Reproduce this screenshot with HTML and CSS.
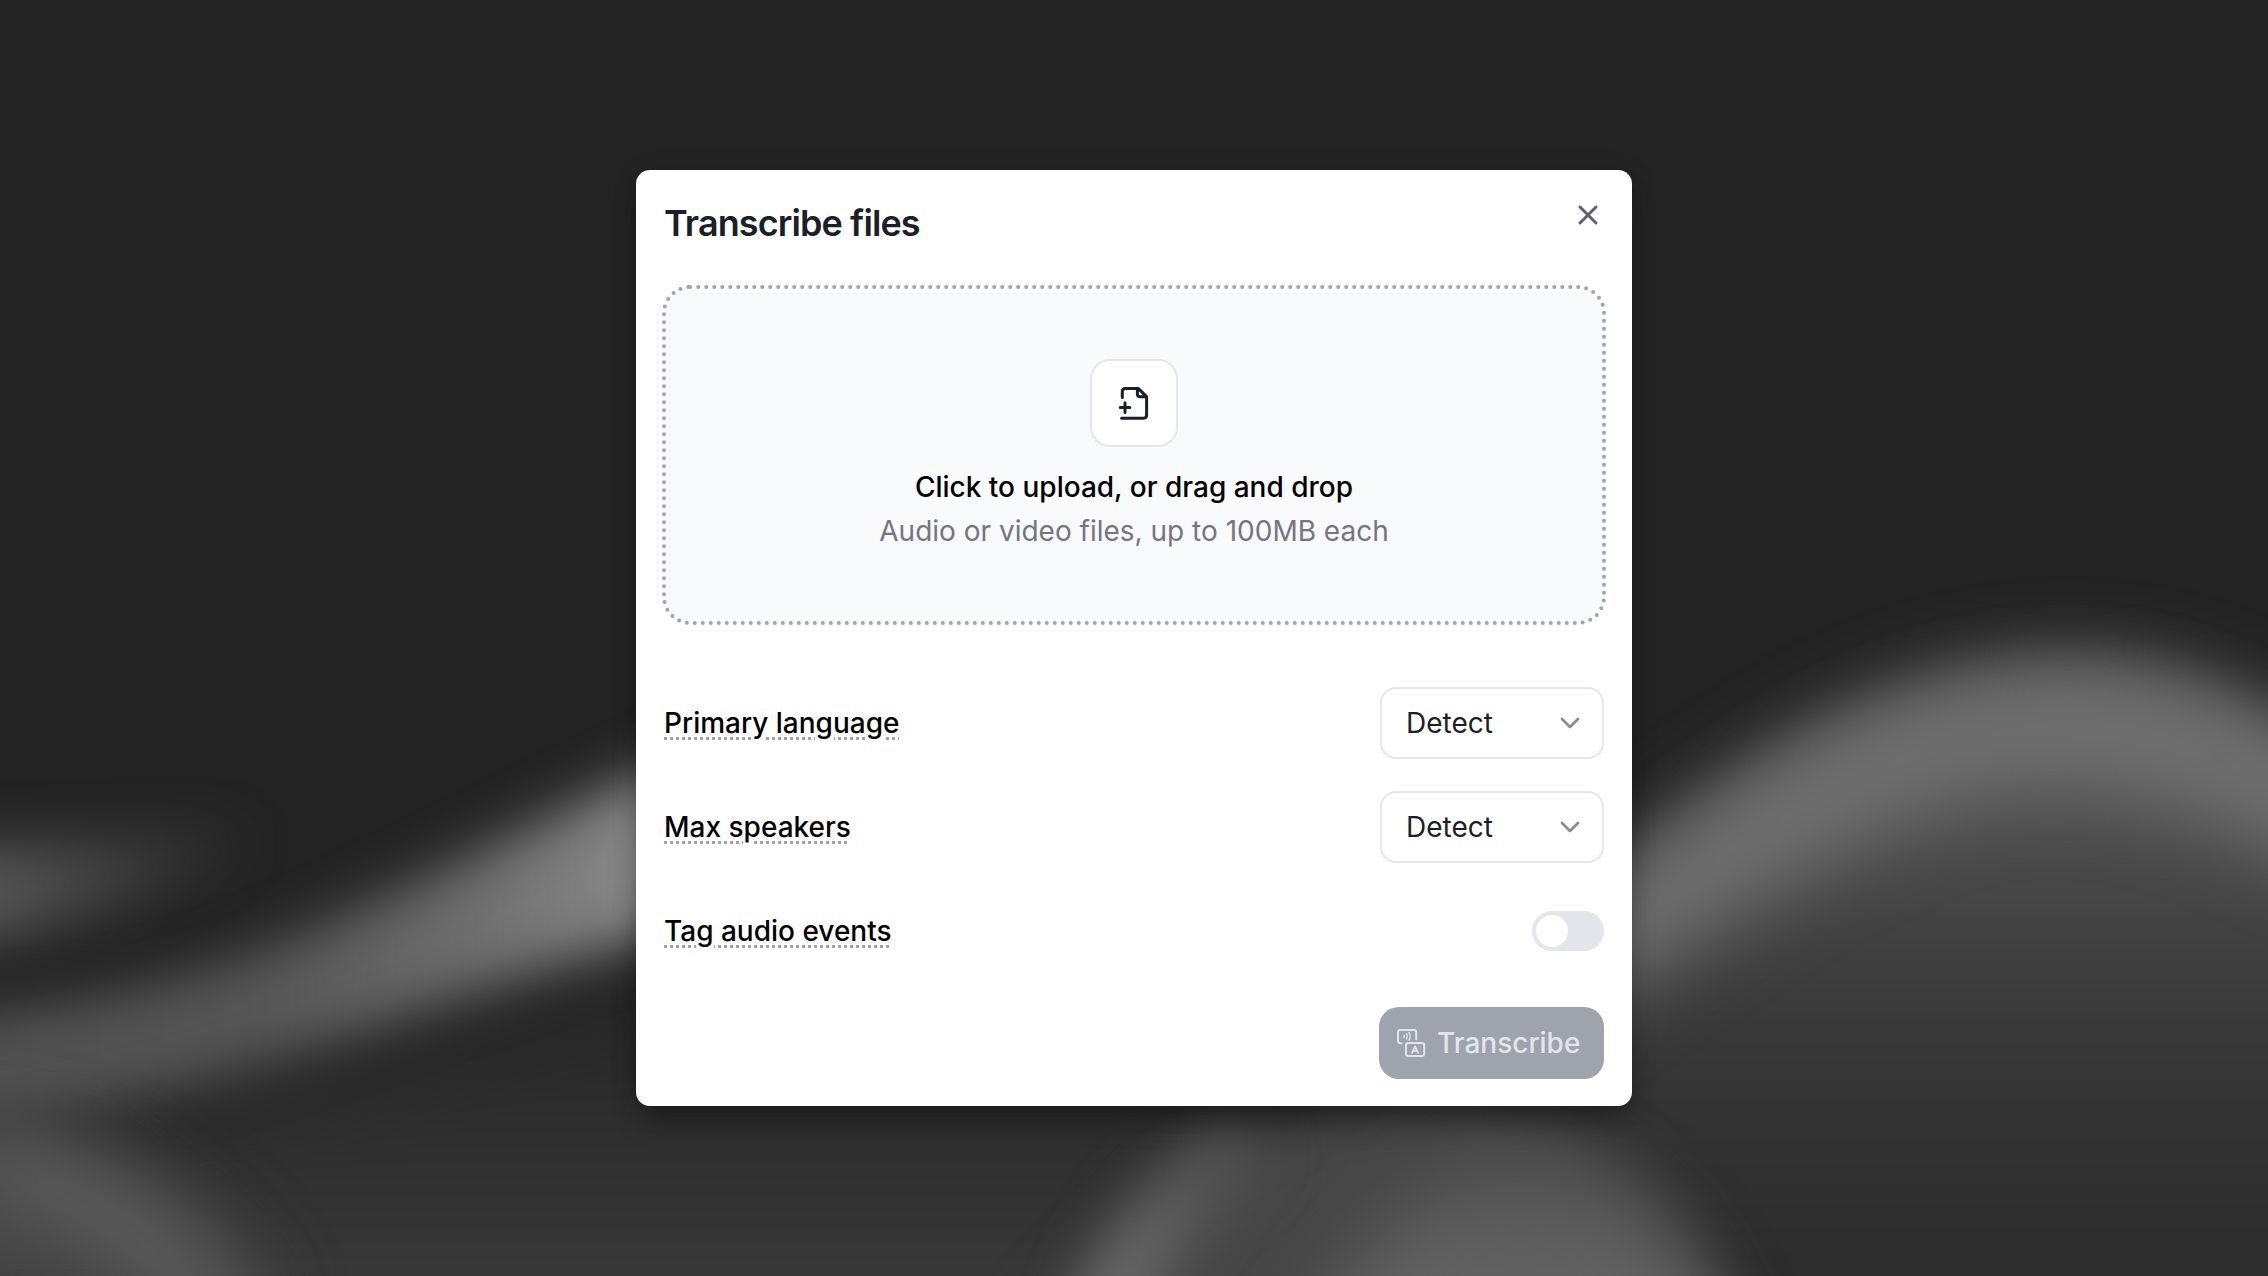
FILE: index.html
```html
<!DOCTYPE html>
<html lang="en">
<head>
<meta charset="utf-8">
<title>Transcribe files</title>
<link rel="stylesheet" href="styles.css">
</head>
<body>
<svg class="backdrop" viewBox="0 0 1568 882" preserveAspectRatio="none" aria-hidden="true">
  <defs>
    <filter id="soft" filterUnits="userSpaceOnUse" x="-200" y="-200" width="2000" height="1400" color-interpolation-filters="sRGB"><feGaussianBlur stdDeviation="18"/></filter>
    <filter id="softer" filterUnits="userSpaceOnUse" x="-200" y="-200" width="2000" height="1400" color-interpolation-filters="sRGB"><feGaussianBlur stdDeviation="26"/></filter>
    <linearGradient id="ribbon" gradientUnits="userSpaceOnUse" x1="0" y1="0" x2="450" y2="0">
      <stop offset="0" stop-color="#525252"/><stop offset=".4" stop-color="#565656"/><stop offset=".7" stop-color="#6c6c6c"/><stop offset="1" stop-color="#8a8a8a"/>
    </linearGradient>
    <linearGradient id="wisp" gradientUnits="userSpaceOnUse" x1="0" y1="0" x2="180" y2="0">
      <stop offset="0" stop-color="#545454"/><stop offset="1" stop-color="#545454" stop-opacity="0"/>
    </linearGradient>
    <linearGradient id="floor" x1="0" y1="0" x2="0" y2="1">
      <stop offset="0" stop-color="#262626"/><stop offset=".4" stop-color="#2f2f2f"/><stop offset="1" stop-color="#3e3e3e"/>
    </linearGradient>
    <linearGradient id="hill" gradientUnits="userSpaceOnUse" x1="0" y1="560" x2="0" y2="882">
      <stop offset="0" stop-color="#4e4e4e"/><stop offset=".5" stop-color="#373737"/><stop offset="1" stop-color="#2c2c2c"/>
    </linearGradient>
    <linearGradient id="sliver" gradientUnits="userSpaceOnUse" x1="0" y1="770" x2="0" y2="882">
      <stop offset="0" stop-color="#484848"/><stop offset="1" stop-color="#6a6a6a"/>
    </linearGradient>
    <linearGradient id="dune" gradientUnits="userSpaceOnUse" x1="0" y1="770" x2="0" y2="882">
      <stop offset="0" stop-color="#4a4a4a"/><stop offset="1" stop-color="#646464"/>
    </linearGradient>
  </defs>
  <rect width="1568" height="882" fill="#242424"/>
  <path d="M-60 790C150 790 330 700 460 680H1200V950H-60Z" fill="url(#floor)" filter="url(#softer)"/>
  <path d="M-60 585C20 585 90 577 200 570C140 610 50 645-60 660Z" fill="url(#wisp)" filter="url(#soft)"/>
  <path d="M-60 702C150 702 280 605 480 520V642C300 680 140 777-60 777Z" fill="url(#ribbon)" filter="url(#soft)"/>
  <path d="M-60 770C60 785 140 810 190 910H-60Z" fill="#454545" filter="url(#softer)"/>
  <path d="M-20 800C70 822 120 860 160 930" fill="none" stroke="#606060" stroke-width="44" filter="url(#softer)"/>
  <path d="M1060 645C1200 525 1300 463 1420 457C1500 455 1560 483 1640 545V950H1060Z" fill="url(#hill)" filter="url(#soft)"/>
  <path d="M1060 652C1200 530 1300 465 1420 460C1500 458 1560 485 1640 537V618C1540 560 1440 532 1370 550C1270 572 1180 650 1060 720Z" fill="#707070" filter="url(#softer)"/>
  <path d="M700 930C790 820 880 760 980 760C1080 760 1155 805 1208 930Z" fill="#464646" filter="url(#soft)"/>
  <path d="M762 930C772 880 800 830 865 785" fill="none" stroke="url(#sliver)" stroke-width="46" filter="url(#soft)"/>
  <path d="M900 940C940 860 980 810 1045 796C1110 802 1165 850 1195 940Z" fill="url(#dune)" filter="url(#softer)"/>
</svg>
<main class="stage">
  <section class="modal">
    <header class="modal-header">
      <h1 class="title">Transcribe files</h1>
      <button class="close" aria-label="Close">
        <svg width="20" height="20" viewBox="0 0 20 20" fill="none" stroke="#5d606a" stroke-width="2.9" stroke-linecap="round"><path d="M2 2l16 16M18 2L2 18"/></svg>
      </button>
    </header>
    <div class="dropzone">
      <svg class="dropzone-outline" width="946" height="342" viewBox="0 0 946 342" aria-hidden="true"><rect x="3" y="3" width="940" height="336" rx="26.2"/></svg>
      <div class="file-tile">
        <svg width="32" height="36" viewBox="0 0 32 36" fill="none" stroke="#1b1f29" stroke-width="3" stroke-linecap="round" stroke-linejoin="round"><path d="M4.3 12.6V6.5Q4.3 3.4 7.3 3.4H20.2L28.6 11.6V29.8Q28.6 33.2 25.6 33.2H3.6M19.4 3.6V9Q19.4 11.8 22.2 11.8H28.4M2.2 22.6H11.8M7 17.8V27.4"/></svg>
      </div>
      <p class="drop-title">Click to upload, or drag and drop</p>
      <p class="drop-hint">Audio or video files, up to 100MB each</p>
    </div>
    <div class="options">
      <div class="row">
        <span class="label">Primary language</span>
        <button class="select">Detect<svg width="22" height="14" viewBox="0 0 22 14"><path d="M3 3l8 8 8-8"/></svg></button>
      </div>
      <div class="row">
        <span class="label">Max speakers</span>
        <button class="select">Detect<svg width="22" height="14" viewBox="0 0 22 14"><path d="M3 3l8 8 8-8"/></svg></button>
      </div>
      <div class="row">
        <span class="label">Tag audio events</span>
        <span class="toggle"><span class="knob"></span></span>
      </div>
    </div>
    <footer class="actions">
      <button class="submit">
        <svg width="30" height="30" viewBox="0 0 30 30" fill="none" stroke="#e3e5ea" stroke-width="2" stroke-linecap="round" stroke-linejoin="round"><path d="M5.6 15.2H4.4Q2 15.2 2 12.8V4.4Q2 2 4.4 2H17.8Q20.2 2 20.2 4.4V11.2"/><rect x="10" y="15" width="18.2" height="13" rx="2.2"/><path stroke-width="1.4" d="M8.1 7.2V9.4M10.6 5.8Q12.2 8.4 10.6 11M13 4.6Q15.4 8.4 13 12.2"/><path stroke-width="1.8" d="M16 24.8L19.1 18.4L22.2 24.8M17.1 22.9H21.1"/></svg>
        Transcribe
      </button>
    </footer>
  </section>
</main>
</body>
</html>
```
FILE: styles.css
```css
* { box-sizing: border-box; }

body {
  margin: 0;
  height: 1276px;
  overflow: hidden;
  background: #242424;
  font-family: Inter, "Liberation Sans", sans-serif;
  font-size: 28px;
  line-height: 40px;
}

h1, p { margin: 0; }

button {
  border: 0;
  padding: 0;
  background: none;
  font: inherit;
  color: inherit;
}

.backdrop {
  position: absolute;
  inset: 0;
  width: 100%;
  height: 100%;
}

.stage {
  position: relative;
  display: flex;
  height: 100%;
  align-items: center;
  justify-content: center;
}

.modal {
  width: 996px;
  height: 936px;
  padding: 28px 28px 27px;
  border-radius: 14px;
  background: #fff;
  box-shadow: 0 20px 30px -6px rgba(0, 0, 0, .32), 0 4px 26px rgba(0, 0, 0, .16);
}

.modal-header {
  display: flex;
  justify-content: space-between;
  align-items: flex-start;
  height: 50px;
  margin-bottom: 39px;
}

.title {
  font-size: 36px;
  line-height: 50px;
  font-weight: 600;
  letter-spacing: -0.9px;
  color: #1b1f29;
}

.close {
  display: flex;
  padding: 7px 6px 0 0;
}

.dropzone {
  position: relative;
  display: flex;
  flex-direction: column;
  align-items: center;
  height: 336px;
  padding-top: 72px;
  border-radius: 28px;
  background: #f9fafc;
}

.dropzone-outline {
  position: absolute;
  left: -3px;
  top: -3px;
  fill: none;
  stroke: #a0a3ad;
  stroke-width: 4;
  stroke-linecap: round;
  stroke-dasharray: 0 8;
}

.file-tile {
  display: flex;
  align-items: center;
  justify-content: center;
  width: 88px;
  height: 88px;
  margin-bottom: 20px;
  border: 2px solid #e6e7ea;
  border-radius: 20px;
  background: #fff;
}

.drop-title {
  margin-bottom: 4px;
  font-weight: 500;
  color: #000;
}

.drop-hint { color: #737682; }

.options {
  display: grid;
  gap: 32px;
  margin-top: 64px;
}

.row {
  display: flex;
  align-items: center;
  justify-content: space-between;
  height: 72px;
}

.label {
  font-weight: 500;
  color: #000;
  text-decoration: underline dotted #a0a3ad 3px;
  text-underline-offset: 4px;
}

.select {
  display: flex;
  align-items: center;
  justify-content: space-between;
  width: 224px;
  height: 72px;
  padding: 0 21px 0 24px;
  border: 2px solid #e6e7ea;
  border-radius: 16px;
  color: #1b1f29;
}

.select path {
  fill: none;
  stroke: #8d8e92;
  stroke-width: 2.8;
  stroke-linecap: round;
  stroke-linejoin: round;
}

.toggle {
  display: flex;
  width: 72px;
  height: 40px;
  padding: 4px;
  border-radius: 20px;
  background: #e4e6eb;
}

.knob {
  width: 32px;
  height: 32px;
  border-radius: 50%;
  background: #fff;
}

.actions {
  display: flex;
  justify-content: flex-end;
  margin-top: 40px;
}

.submit {
  display: flex;
  align-items: center;
  gap: 11px;
  width: 225px;
  height: 72px;
  padding-left: 17px;
  border-radius: 20px;
  background: #9fa3ae;
  color: #e3e5ea;
  font-weight: 500;
}
```
